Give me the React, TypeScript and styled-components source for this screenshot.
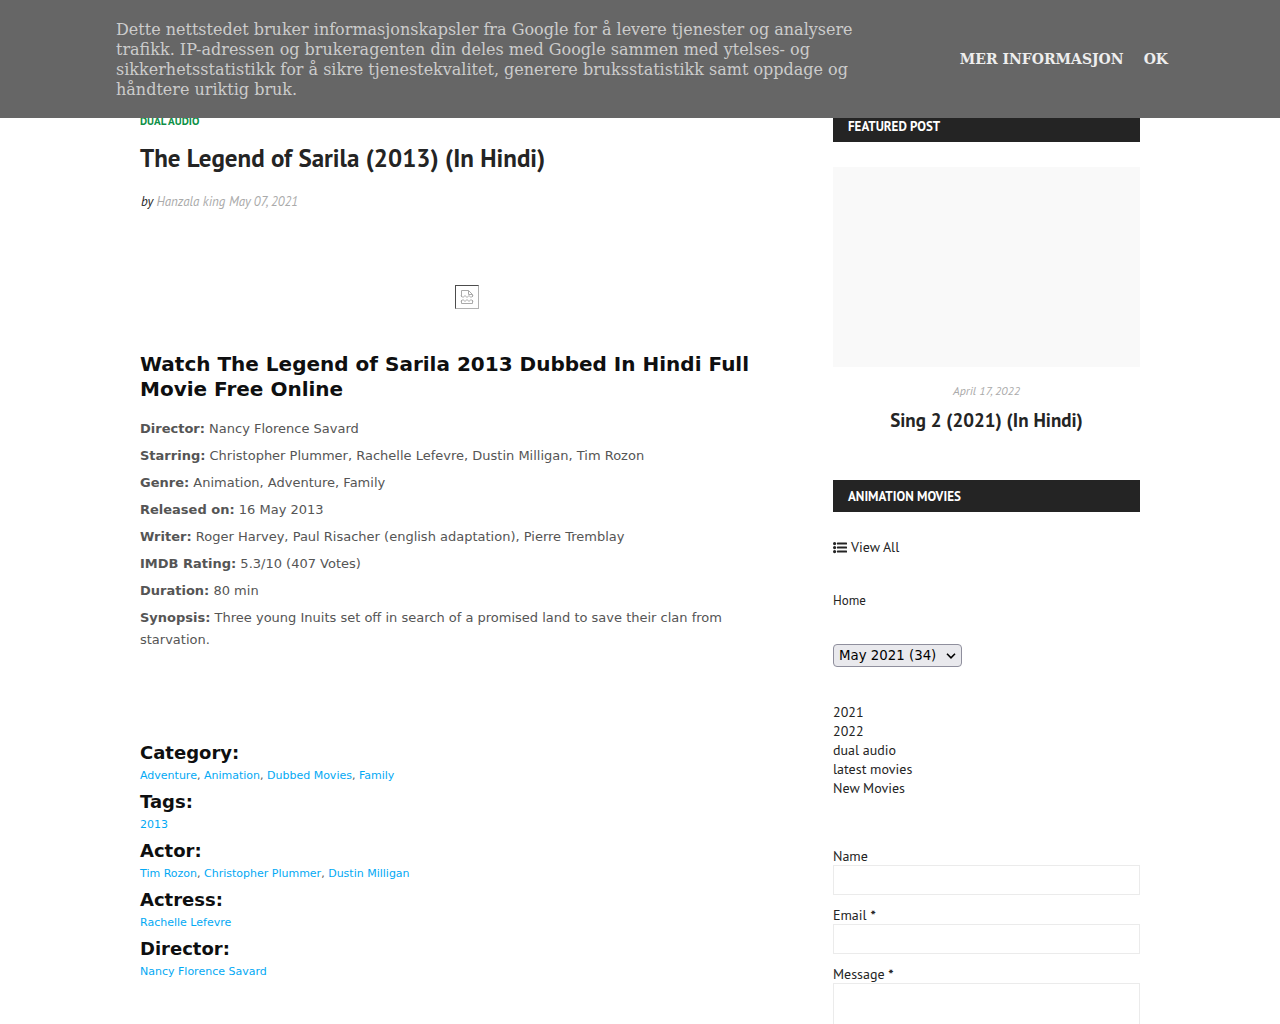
import React from "react";
import styled, { createGlobalStyle } from "styled-components";

const sans = `"PT Sans", Lato, "Noto Sans", sans-serif`;
const body = `"DejaVu Sans", Verdana, sans-serif`;
const serif = `"DejaVu Serif", Georgia, serif`;

const GlobalStyle = createGlobalStyle`
  * { box-sizing: border-box; }
  body {
    margin: 0;
    background: #ffffff;
    color: #242424;
    font: 14px/19px ${sans};
  }
  a { color: inherit; text-decoration: none; }
  h1, h2, h3, p, ul { margin: 0; padding: 0; }
`;

const CookieBar = styled.aside`
  position: fixed;
  top: 0;
  left: 0;
  right: 0;
  z-index: 10;
  background: #666666;
  font-family: ${serif};
`;

const CookieInner = styled.div`
  display: flex;
  align-items: center;
  justify-content: space-between;
  gap: 80px;
  max-width: 1080px;
  margin: 0 auto;
  padding: 18px 12px 18px 16px;
`;

const CookieText = styled.p`
  max-width: 760px;
  padding-top: 2px;
  color: #cccccc;
  font-size: 16px;
  line-height: 20px;
`;

const CookieActions = styled.div`
  display: flex;
  gap: 20px;
  flex-shrink: 0;
  color: #eeeeee;
  font-size: 14px;
  font-weight: bold;
  line-height: 20px;
`;

const CookieButton = styled.button`
  padding: 0;
  border: 0;
  background: none;
  color: inherit;
  font: inherit;
  cursor: pointer;
`;

const Page = styled.div`
  display: grid;
  grid-template-columns: minmax(0, 1fr) 307px;
  gap: 40px;
  max-width: 1000px;
  margin: 0 auto;
  padding-top: 110px;
`;

const Article = styled.main`
  display: flex;
  flex-direction: column;
`;

const Label = styled.a`
  color: #0d9047;
  font-size: 11px;
  font-weight: bold;
  line-height: 22px;
  text-transform: uppercase;
`;

const Title = styled.h1`
  padding-top: 10px;
  font-size: 25px;
  font-weight: bold;
  line-height: 32px;
`;

const Byline = styled.p`
  padding: 18px 0 0 1px;
  color: #aaaaaa;
  font-size: 13px;
  font-style: italic;
  line-height: 19px;
`;

const Dark = styled.span`
  color: #242424;
`;

const MissingImage = styled.div`
  display: grid;
  place-items: center;
  align-self: center;
  width: 24px;
  height: 24px;
  margin: 74px 0 43px;
  border: 1px solid;
  border-color: #4c4c4c #b2b2b2 #b2b2b2 #4c4c4c;
`;

const Subtitle = styled.h2`
  margin-bottom: 16px;
  color: #0e0f10;
  font: bold 20px/25px ${body};
`;

const Facts = styled.div`
  display: flex;
  flex-direction: column;
  gap: 5px;
  max-width: 612px;
  color: #555555;
  font: 13px/22px ${body};
`;

const Terms = styled.section`
  padding-top: 91px;
  color: #555555;
  font: 11px/22px ${body};
`;

const TermHeading = styled.h3`
  color: #0e0f10;
  font-size: 18px;
  line-height: 22px;
`;

const TermList = styled.p`
  padding: 1px 0 4px;
`;

const TermLink = styled.a`
  color: #03a9f4;
`;

const Sidebar = styled.aside`
  display: flex;
  flex-direction: column;
`;

const WidgetTitle = styled.h3`
  padding: 2px 15px 0;
  background: #242424;
  color: #ffffff;
  font-size: 13px;
  font-weight: bold;
  line-height: 30px;
  text-transform: uppercase;
`;

const Thumb = styled.a`
  display: block;
  height: 200px;
  margin: 25px 0 15px;
  background: #f9f9f9;
`;

const PostDate = styled.time`
  color: #aaaaaa;
  font-size: 12px;
  font-style: italic;
  line-height: 17px;
  text-align: center;
`;

const PostTitle = styled.h2`
  margin: 6px 0 45px;
  font-size: 19px;
  font-weight: bold;
  line-height: 30px;
  text-align: center;
`;

const ViewAll = styled.a`
  display: flex;
  align-items: center;
  gap: 4px;
  padding-top: 26px;
`;

const HomeLink = styled.a`
  padding: 34px 0;
  font-size: 13px;
`;

const SelectBox = styled.div`
  display: grid;
  align-items: center;
  align-self: flex-start;
  width: 129px;

  > * { grid-area: 1 / 1; }

  > svg {
    justify-self: end;
    margin-right: 6px;
    pointer-events: none;
  }
`;

const Select = styled.select`
  appearance: none;
  height: 23px;
  padding: 0 5px;
  border: 1px solid #8f8f9d;
  border-radius: 4px;
  background: #e9e9ed;
  color: #000000;
  font-family: ${body};
`;

const LinkList = styled.ul`
  padding: 36px 0 49px;
  list-style: none;
`;

const Form = styled.form`
  display: flex;
  flex-direction: column;
  gap: 11px;
`;

const Field = styled.label`
  display: flex;
  flex-direction: column;
  line-height: 18px;
`;

const Input = styled.input`
  height: 30px;
  padding: 5px;
  border: 1px solid #ebebeb;
  background: #ffffff;
  font: inherit;
`;

const TextArea = styled.textarea`
  height: 90px;
  padding: 5px;
  border: 1px solid #ebebeb;
  background: #ffffff;
  font: inherit;
  resize: none;
`;

const facts: [string, string][] = [
  ["Director:", "Nancy Florence Savard"],
  ["Starring:", "Christopher Plummer, Rachelle Lefevre, Dustin Milligan, Tim Rozon"],
  ["Genre:", "Animation, Adventure, Family"],
  ["Released on:", "16 May 2013"],
  ["Writer:", "Roger Harvey, Paul Risacher (english adaptation), Pierre Tremblay"],
  ["IMDB Rating:", "5.3/10 (407 Votes)"],
  ["Duration:", "80 min"],
  ["Synopsis:", "Three young Inuits set off in search of a promised land to save their clan from starvation."],
];

const terms: [string, string[]][] = [
  ["Category:", ["Adventure", "Animation", "Dubbed Movies", "Family"]],
  ["Tags:", ["2013"]],
  ["Actor:", ["Tim Rozon", "Christopher Plummer", "Dustin Milligan"]],
  ["Actress:", ["Rachelle Lefevre"]],
  ["Director:", ["Nancy Florence Savard"]],
];

const categories = ["2021", "2022", "dual audio", "latest movies", "New Movies"];

const BrokenIcon = () => (
  <svg width="14" height="16" viewBox="0 0 14 16" fill="none" stroke="#aaaaaa" aria-hidden="true">
    <path d="M1.5 8V1.5H8.5L12.5 5.5V8" />
    <path d="M8.5 1.5V5.5H12.5" />
    <path d="M1 6.5L3 8.5L5 6.5L7 8.5L9 6.5L11 8.5L13 6.5" />
    <path d="M1.5 11V14.5H12.5V11" />
    <path d="M1 12.5L3 10.5L5 12.5L7 10.5L9 12.5L11 10.5L13 12.5" />
  </svg>
);

const ListIcon = () => (
  <svg width="14" height="12" viewBox="0 0 14 12" fill="#242424" aria-hidden="true">
    <circle cx="1.6" cy="1.6" r="1.6" />
    <circle cx="1.6" cy="5.6" r="1.6" />
    <circle cx="1.6" cy="9.6" r="1.6" />
    <rect x="4" y="0.6" width="10" height="2" rx="0.4" />
    <rect x="4" y="4.6" width="10" height="2" rx="0.4" />
    <rect x="4" y="8.6" width="10" height="2" rx="0.4" />
  </svg>
);

const Chevron = () => (
  <svg width="10" height="6" viewBox="0 0 10 6" fill="none" stroke="#000000" strokeWidth="1.6" aria-hidden="true">
    <path d="M1 0.8L5 4.8L9 0.8" />
  </svg>
);

export default function App() {
  return (
    <>
      <GlobalStyle />
      <CookieBar>
        <CookieInner>
          <CookieText>
            Dette nettstedet bruker informasjonskapsler fra Google for å levere tjenester og
            analysere trafikk. IP-adressen og brukeragenten din deles med Google sammen med
            ytelses- og sikkerhetsstatistikk for å sikre tjenestekvalitet, generere
            bruksstatistikk samt oppdage og håndtere uriktig bruk.
          </CookieText>
          <CookieActions>
            <a href="#info">MER INFORMASJON</a>
            <CookieButton type="button">OK</CookieButton>
          </CookieActions>
        </CookieInner>
      </CookieBar>

      <Page>
        <Article>
          <Label href="#dual-audio">dual audio</Label>
          <Title>The Legend of Sarila (2013) (In Hindi)</Title>
          <Byline>
            <Dark>by</Dark> <a href="#author">Hanzala king</a> <time>May 07, 2021</time>
          </Byline>
          <MissingImage>
            <BrokenIcon />
          </MissingImage>
          <Subtitle>Watch The Legend of Sarila 2013 Dubbed In Hindi Full Movie Free Online</Subtitle>
          <Facts>
            {facts.map(([name, value]) => (
              <p key={name}>
                <strong>{name}</strong> {value}
              </p>
            ))}
          </Facts>
          <Terms>
            {terms.map(([name, links]) => (
              <React.Fragment key={name}>
                <TermHeading>{name}</TermHeading>
                <TermList>
                  {links.map((link, i) => (
                    <React.Fragment key={link}>
                      {i > 0 && ", "}
                      <TermLink href="#term">{link}</TermLink>
                    </React.Fragment>
                  ))}
                </TermList>
              </React.Fragment>
            ))}
          </Terms>
        </Article>

        <Sidebar>
          <WidgetTitle>Featured Post</WidgetTitle>
          <Thumb href="#sing-2" aria-label="Sing 2 (2021) (In Hindi)" />
          <PostDate>April 17, 2022</PostDate>
          <PostTitle>
            <a href="#sing-2">Sing 2 (2021) (In Hindi)</a>
          </PostTitle>
          <WidgetTitle>Animation Movies</WidgetTitle>
          <ViewAll href="#all">
            <ListIcon />
            View All
          </ViewAll>
          <HomeLink href="#home">Home</HomeLink>
          <SelectBox>
            <Select aria-label="Archive">
              <option>May 2021 (34)</option>
            </Select>
            <Chevron />
          </SelectBox>
          <LinkList>
            {categories.map((name) => (
              <li key={name}>
                <a href="#label">{name}</a>
              </li>
            ))}
          </LinkList>
          <Form>
            <Field>
              Name
              <Input type="text" />
            </Field>
            <Field>
              <span>Email <strong>*</strong></span>
              <Input type="email" />
            </Field>
            <Field>
              <span>Message <strong>*</strong></span>
              <TextArea />
            </Field>
          </Form>
        </Sidebar>
      </Page>
    </>
  );
}
